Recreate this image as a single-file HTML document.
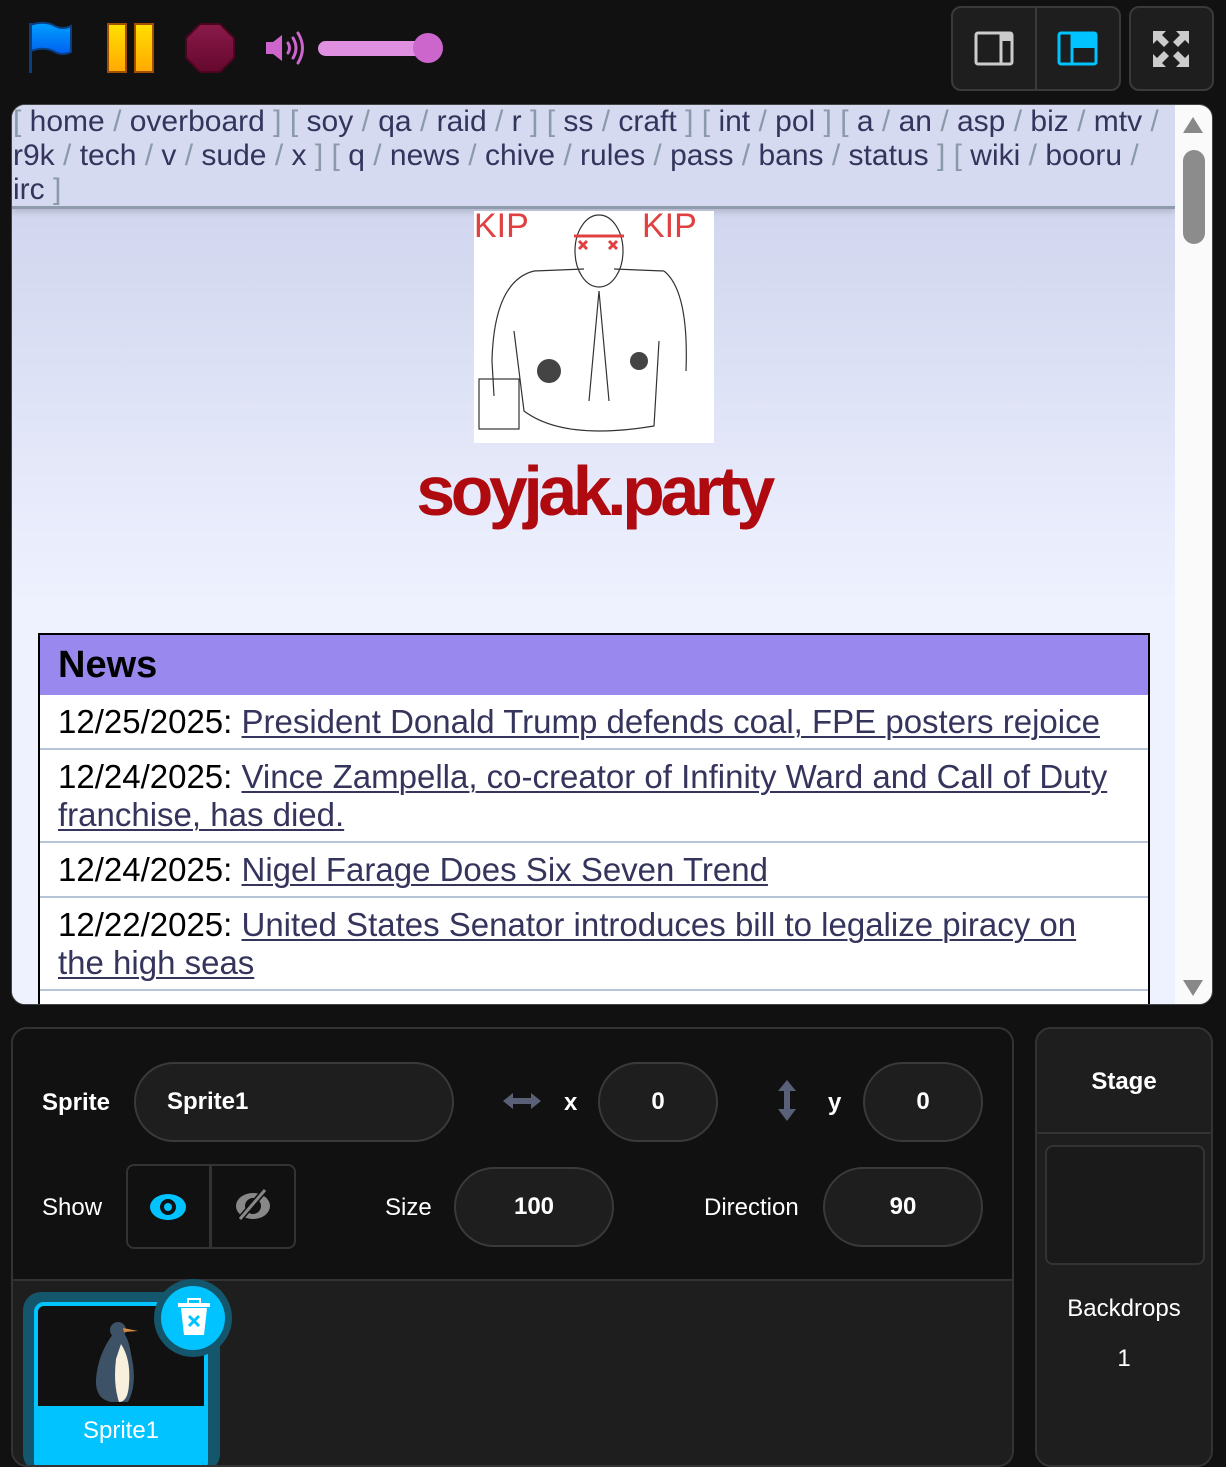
<!DOCTYPE html>
<html><head><meta charset="utf-8">
<style>
*{box-sizing:border-box;margin:0;padding:0}
body{width:1226px;height:1455px;background:#111;overflow:hidden;position:relative;font-family:"Liberation Sans",sans-serif}
.abs{position:absolute}
.frame{left:11px;top:104px;width:1202px;height:901px;border-radius:14px;overflow:hidden;background:#fafafa;border:1px solid #444}
.content{left:0;top:0;width:1163px;height:901px;overflow:hidden;background:linear-gradient(#d1d5ee 100px,#eef2ff 500px)}
.nav{left:0;top:0;width:1163px;height:104px;background:#d6daf0;border-bottom:3px solid #8d9bab;box-shadow:0 3px 6px rgba(0,0,0,.15);font-size:30px;line-height:34px;color:#34345c;padding-left:1px;white-space:nowrap}
.nav i{font-style:normal;color:#8a9aa8}
.news{left:26px;top:528px;width:1112px;border:2px solid #000;background:#fff;height:400px}
.news h2{background:#9988ee;height:60px;font-size:38px;line-height:60px;padding-left:18px;font-weight:bold;color:#000}
.row{border-top:2px solid #b7c5d9;font-size:33px;line-height:38px;padding:8px 18px 7px;color:#000}
.row a{color:#34345c;text-decoration:underline;text-decoration-thickness:2px;text-underline-offset:3px}
.panel{left:11px;top:1027px;width:1003px;height:440px;border:2px solid #333;border-radius:16px;overflow:hidden;background:#1e1e1e}
.top{left:0;top:0;width:1000px;height:252px;background:#111;border-bottom:2px solid #333}
.lbl{color:#fff;font-size:24px}
.pill{border:2px solid #3a3a3a;background:#1e1e1e;border-radius:40px;color:#fff;font-weight:bold;font-size:24px;text-align:center;line-height:76px;height:80px}
.stage{left:1035px;top:1027px;width:178px;height:440px;border:2px solid #333;border-radius:16px;background:#1e1e1e}
</style></head><body>
<svg class="abs" style="left:0;top:0" width="470" height="100">
<defs><linearGradient id="fl" x1="0" y1="0" x2="0" y2="1"><stop offset="0" stop-color="#00a0ff"/><stop offset="1" stop-color="#0060f0"/></linearGradient>
<linearGradient id="pa" x1="0" y1="0" x2="0" y2="1"><stop offset="0" stop-color="#ffe000"/><stop offset="1" stop-color="#ffa800"/></linearGradient>
<linearGradient id="st" x1="0" y1="0" x2="0" y2="1"><stop offset="0" stop-color="#8a1a4a"/><stop offset="1" stop-color="#65082e"/></linearGradient></defs>
<path d="M30 25 Q45 20 55 26 Q63 30 71 26 L71 52 Q63 56 55 52 Q45 46 31 51 Z" fill="url(#fl)" stroke="#0a3e80" stroke-width="2"/>
<rect x="29" y="23" width="3" height="50" fill="#0a3e80"/>
<rect x="108" y="24" width="18" height="48" fill="url(#pa)" stroke="#a05000" stroke-width="2"/>
<rect x="135" y="24" width="18" height="48" fill="url(#pa)" stroke="#a05000" stroke-width="2"/>
<polygon points="200,24 220,24 234,38 234,58 220,72 200,72 186,58 186,38" fill="url(#st)" stroke="#4a0520" stroke-width="2"/>
<path d="M266 42 h7 l9 -7 v26 l-9 -7 h-7 z" fill="#cc66cc"/>
<path d="M288 43 q3 5 0 10 M293 38 q6 10 0 20 M298 33 q9 15 0 30" stroke="#cc66cc" stroke-width="3" fill="none" stroke-linecap="round"/>
<rect x="318" y="41" width="110" height="15" rx="7.5" fill="#e090e0"/>
<circle cx="428" cy="48" r="15" fill="#cc66cc"/>
</svg>
<div class="abs" style="left:951px;top:6px;width:170px;height:85px;border:2px solid #3a3a3a;border-radius:10px;background:#1e1e1e"></div>
<div class="abs" style="left:1035px;top:7px;width:2px;height:83px;background:#3a3a3a"></div>
<div class="abs" style="left:1129px;top:6px;width:85px;height:85px;border:2px solid #3a3a3a;border-radius:10px;background:#1e1e1e"></div>
<svg class="abs" style="left:951px;top:6px" width="270" height="85">
<rect x="25" y="27" width="36" height="31" rx="2" fill="none" stroke="#ccc" stroke-width="3"/><rect x="49" y="27" width="12" height="8" fill="#ccc"/><line x1="50" y1="27" x2="50" y2="58" stroke="#ccc" stroke-width="3"/>
<rect x="108" y="27" width="37" height="31" rx="2" fill="none" stroke="#00c3ff" stroke-width="3"/><rect x="122" y="27" width="23" height="15" fill="#00c3ff"/><line x1="121" y1="27" x2="121" y2="58" stroke="#00c3ff" stroke-width="3"/>
<g fill="#ccc"><path d="M202 25 h13 l-4 4 7 7 -5 5 -7 -7 -4 4z"/><path d="M238 25 h-13 l4 4 -7 7 5 5 7 -7 4 4z"/><path d="M202 61 h13 l-4 -4 7 -7 -5 -5 -7 7 -4 -4z"/><path d="M238 61 h-13 l4 -4 -7 -7 5 -5 7 7 4 -4z"/></g>
</svg>
<div class="abs frame">
 <div class="abs content">
  <div class="abs nav"><i>[</i> home <i>/</i> overboard <i>]</i> <i>[</i> soy <i>/</i> qa <i>/</i> raid <i>/</i> r <i>]</i> <i>[</i> ss <i>/</i> craft <i>]</i> <i>[</i> int <i>/</i> pol <i>]</i> <i>[</i> a <i>/</i> an <i>/</i> asp <i>/</i> biz <i>/</i> mtv <i>/</i><br>r9k <i>/</i> tech <i>/</i> v <i>/</i> sude <i>/</i> x <i>]</i> <i>[</i> q <i>/</i> news <i>/</i> chive <i>/</i> rules <i>/</i> pass <i>/</i> bans <i>/</i> status <i>]</i> <i>[</i> wiki <i>/</i> booru <i>/</i><br>irc <i>]</i></div>
  <div class="abs" style="left:462px;top:106px;width:240px;height:232px;background:#fff;overflow:hidden">
   <svg width="240" height="232" fill="none" stroke="#333" stroke-width="1.2">
    <text x="0" y="26" fill="#e04040" stroke="none" font-size="34" font-family="Liberation Sans">KIP</text>
    <text x="168" y="26" fill="#e04040" stroke="none" font-size="34" font-family="Liberation Sans">KIP</text>
    <ellipse cx="125" cy="40" rx="24" ry="36"/>
    <path d="M100 25 h50 M105 30 l8 8 M113 30 l-8 8 M135 30 l8 8 M143 30 l-8 8" stroke="#e04040" stroke-width="3"/>
    <path d="M60 60 Q20 70 18 150 L20 185 M190 60 Q215 80 212 160 M60 60 L110 58 M140 58 L190 60 M125 80 L115 190 M125 80 L135 190 M40 120 L50 200 Q90 230 180 215 L185 130"/>
    <rect x="5" y="168" width="40" height="50"/>
    <circle cx="75" cy="160" r="12" fill="#444" stroke="none"/><circle cx="165" cy="150" r="9" fill="#444" stroke="none"/>
   </svg>
  </div>
  <div class="abs" style="left:0;top:346px;width:1163px;text-align:center;font-size:70px;font-weight:bold;color:#af0a0f;letter-spacing:-4.5px">soyjak.party</div>
  <div class="abs news">
   <h2>News</h2>
   <div class="row" style="border-top:none">12/25/2025: <a>President Donald Trump defends coal, FPE posters rejoice</a></div>
   <div class="row">12/24/2025: <a>Vince Zampella, co-creator of Infinity Ward and Call of Duty franchise, has died.</a></div>
   <div class="row">12/24/2025: <a>Nigel Farage Does Six Seven Trend</a></div>
   <div class="row">12/22/2025: <a>United States Senator introduces bill to legalize piracy on the high seas</a></div>
   <div class="row">12/20/2025: <a>The Department of Homeland Security ...</a></div>
  </div>
 </div>
 <svg class="abs" style="left:1164px;top:0" width="38" height="901">
  <path d="M7 28 L17 12 L27 28 Z" fill="#888"/>
  <rect x="7" y="45" width="22" height="94" rx="11" fill="#8c8c8c"/>
  <path d="M7 875 L17 891 L27 875 Z" fill="#888"/>
 </svg>
</div>
<div class="abs panel">
 <div class="abs top">
  <div class="abs lbl" style="left:29px;top:60px;font-weight:bold">Sprite</div>
  <div class="abs pill" style="left:121px;top:33px;width:320px;text-align:left;padding-left:31px">Sprite1</div>
  <svg class="abs" style="left:488px;top:62px" width="44" height="20"><path d="M2 10 L12 2 V7 H30 V2 L40 10 L30 18 V13 H12 V18 Z" fill="#5a6078"/></svg>
  <div class="abs lbl" style="left:551px;top:60px;font-weight:bold">x</div>
  <div class="abs pill" style="left:585px;top:33px;width:120px">0</div>
  <svg class="abs" style="left:762px;top:50px" width="24" height="44"><path d="M12 1 L21 12 H15 V30 H21 L12 42 L3 30 H9 V12 H3 Z" fill="#5a6078"/></svg>
  <div class="abs lbl" style="left:815px;top:60px;font-weight:bold">y</div>
  <div class="abs pill" style="left:850px;top:33px;width:120px">0</div>
  <div class="abs lbl" style="left:29px;top:165px">Show</div>
  <div class="abs" style="left:113px;top:135px;width:170px;height:85px;border:2px solid #333;border-radius:8px"></div>
  <div class="abs" style="left:196px;top:136px;width:3px;height:83px;background:#333"></div>
  <svg class="abs" style="left:135px;top:160px" width="40" height="36"><ellipse cx="20" cy="18" rx="18" ry="13" fill="#00c3ff"/><circle cx="20" cy="18" r="8" fill="#111"/><circle cx="20" cy="18" r="4" fill="#00c3ff"/></svg>
  <svg class="abs" style="left:220px;top:155px" width="40" height="40"><ellipse cx="20" cy="22" rx="17" ry="13" fill="#888"/><circle cx="20" cy="22" r="8" fill="#111"/><line x1="7" y1="35" x2="32" y2="6" stroke="#111" stroke-width="6"/><line x1="7" y1="35" x2="32" y2="6" stroke="#888" stroke-width="3"/></svg>
  <div class="abs lbl" style="left:372px;top:165px">Size</div>
  <div class="abs pill" style="left:441px;top:138px;width:160px">100</div>
  <div class="abs lbl" style="left:691px;top:165px">Direction</div>
  <div class="abs pill" style="left:810px;top:138px;width:160px">90</div>
 </div>
 <div class="abs" style="left:10px;top:263px;width:197px;height:180px;border-radius:18px;background:#14566c"></div>
 <div class="abs" style="left:21px;top:273px;width:174px;height:170px;border:4px solid #00c3ff;border-radius:10px;background:#111;overflow:hidden">
  <svg class="abs" style="left:45px;top:8px" width="80" height="100"><path d="M30 20 Q15 40 13 65 Q12 85 28 88 L45 88 Q55 70 48 40 Q46 25 40 18 Z" fill="#3d5266"/><path d="M38 30 Q48 45 46 70 Q45 88 36 88 Q30 70 33 45 Z" fill="#f6f0dc"/><circle cx="35" cy="16" r="8" fill="#3d5266"/><path d="M40 14 L55 17 L41 18 Z" fill="#d98c40"/></svg>
  <div class="abs" style="left:0;top:100px;width:166px;height:70px;background:#00c3ff;color:#fff;font-size:24px;text-align:center;padding-top:11px">Sprite1</div>
 </div>
 <div class="abs" style="left:141px;top:250px;width:78px;height:78px;border-radius:50%;background:#14566c"></div>
 <div class="abs" style="left:148px;top:257px;width:64px;height:64px;border-radius:50%;background:#00c3ff"></div>
 <svg class="abs" style="left:163px;top:268px" width="36" height="40"><rect x="2" y="6" width="32" height="4" fill="#fff"/><rect x="12" y="2" width="12" height="5" fill="none" stroke="#fff" stroke-width="2"/><path d="M5 11 H31 L28 38 H8 Z" fill="#fff"/><path d="M13 19 L23 29 M23 19 L13 29" stroke="#00c3ff" stroke-width="3"/></svg>
</div>
<div class="abs stage">
 <div class="abs" style="left:0;top:39px;width:174px;text-align:center;color:#fff;font-weight:bold;font-size:24px">Stage</div>
 <div class="abs" style="left:0;top:103px;width:174px;height:2px;background:#333"></div>
 <div class="abs" style="left:8px;top:116px;width:160px;height:120px;border:2px solid #333;border-radius:8px;background:#1a1a1a"></div>
 <div class="abs" style="left:0;top:266px;width:174px;text-align:center;color:#fff;font-size:24px">Backdrops</div>
 <div class="abs" style="left:0;top:316px;width:174px;text-align:center;color:#fff;font-size:24px">1</div>
</div>
</body></html>
